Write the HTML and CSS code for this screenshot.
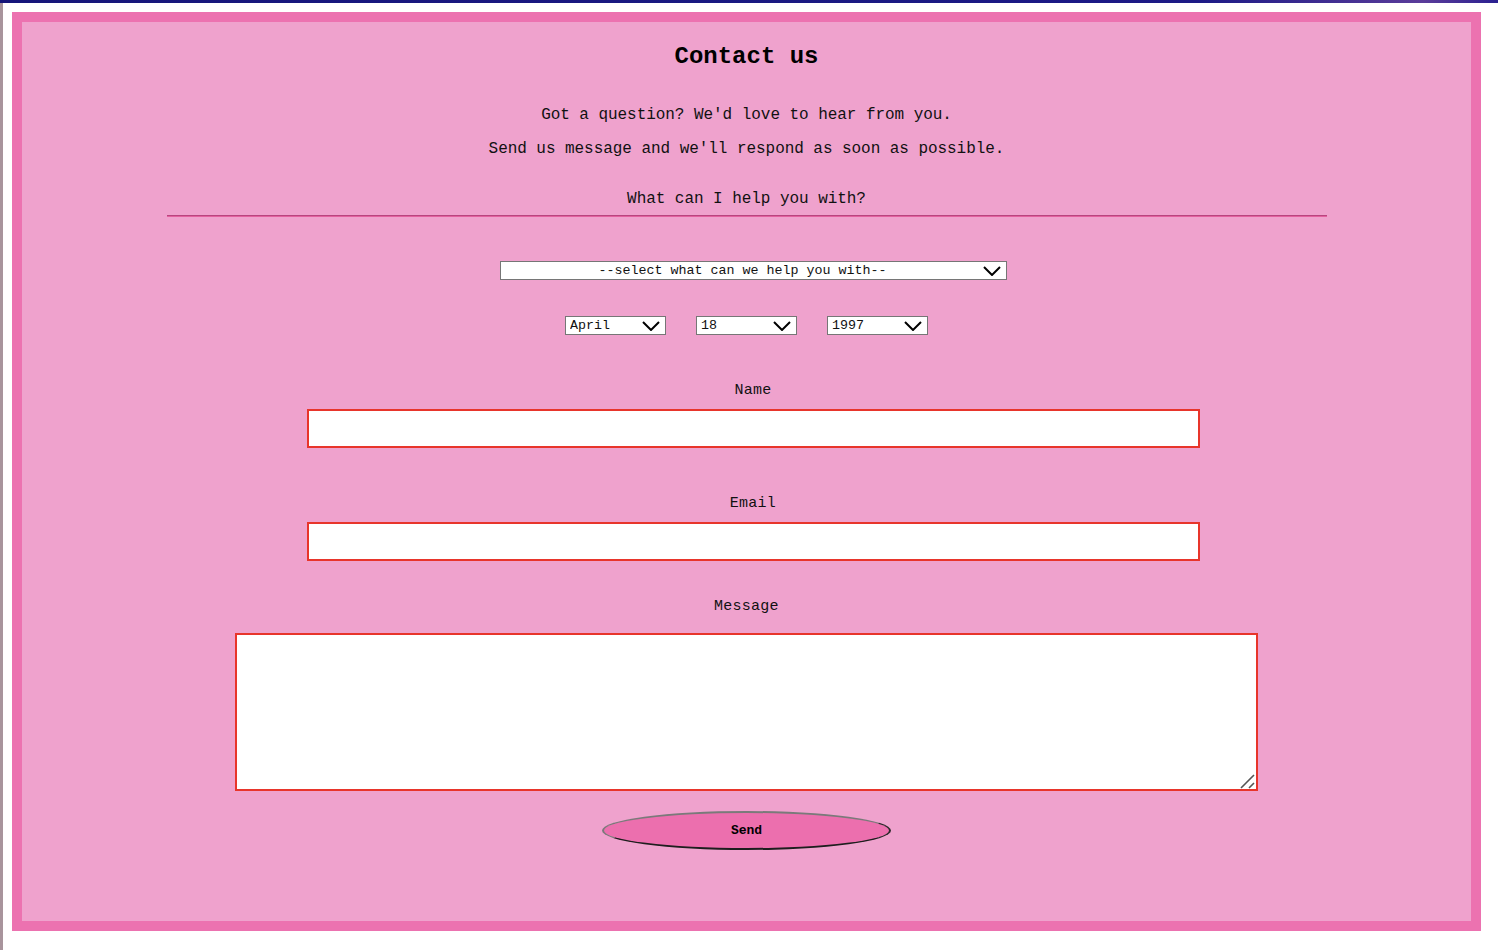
FILE: index.html
```html
<!DOCTYPE html>
<html lang="en">
<head>
<meta charset="utf-8">
<title>Contact us</title>
<link rel="stylesheet" href="styles.css">
</head>
<body>
<div class="topbar"></div>
<div class="page">
  <div class="sidebar"></div>
  <main class="panel">
    <h1 class="title">Contact us</h1>
    <p class="lead lead--first">Got a question? We'd love to hear from you.</p>
    <p class="lead lead--second">Send us message and we'll respond as soon as possible.</p>
    <p class="lead lead--third">What can I help you with?</p>
    <div class="rule"></div>

    <div class="row row--topic">
      <span class="select-wrap">
        <select class="select select--topic">
          <option>--select what can we help you with--</option>
        </select>
        <svg class="chevron" width="18" height="10" viewBox="0 0 18 10"><path d="M1 1 L9 9 L17 1" fill="none" stroke="#000" stroke-width="2"/></svg>
      </span>
    </div>

    <div class="row row--date">
      <span class="select-wrap">
        <select class="select select--date"><option>April</option></select>
        <svg class="chevron" width="18" height="10" viewBox="0 0 18 10"><path d="M1 1 L9 9 L17 1" fill="none" stroke="#000" stroke-width="2"/></svg>
      </span>
      <span class="select-wrap">
        <select class="select select--date"><option>18</option></select>
        <svg class="chevron" width="18" height="10" viewBox="0 0 18 10"><path d="M1 1 L9 9 L17 1" fill="none" stroke="#000" stroke-width="2"/></svg>
      </span>
      <span class="select-wrap">
        <select class="select select--date"><option>1997</option></select>
        <svg class="chevron" width="18" height="10" viewBox="0 0 18 10"><path d="M1 1 L9 9 L17 1" fill="none" stroke="#000" stroke-width="2"/></svg>
      </span>
    </div>

    <div class="field field--offset field--name">
      <label class="label">Name</label>
      <input class="input" type="text">
    </div>

    <div class="field field--offset field--email">
      <label class="label">Email</label>
      <input class="input" type="text">
    </div>

    <div class="field field--message">
      <label class="label">Message</label>
      <span class="textarea-wrap">
        <textarea class="textarea"></textarea>
        <svg class="grip" width="16" height="16" viewBox="0 0 16 16"><path d="M2 15 L15 2 M10 15 L15 10" fill="none" stroke="#555" stroke-width="1.6"/></svg>
      </span>
    </div>

    <div class="actions">
      <button class="send" type="button">Send</button>
    </div>
  </main>
</div>
</body>
</html>
```

FILE: styles.css
```css
* { box-sizing: border-box; }

html, body {
  margin: 0;
  padding: 0;
  background: #ffffff;
}

body {
  width: 1498px;
  height: 950px;
  overflow: hidden;
  font-family: "Liberation Mono", "Courier New", monospace;
  color: #000;
}

.topbar {
  height: 3px;
  background: linear-gradient(90deg, #16167a 0%, #1c1a86 80%, #5a3c9a 95%, #2a2090 100%);
}

.page {
  display: flex;
  align-items: flex-start;
  padding-top: 9px;
}

.sidebar {
  width: 3px;
  height: 947px;
  margin-top: -9px;
  background: #a8949c;
  flex: none;
}

.panel {
  margin-left: 9px;
  width: 1469px;
  height: 919px;
  border: 10px solid #ec72b0;
  background: #efa2cd;
  padding-top: 21px;
  text-align: center;
  flex: none;
}

.title {
  margin: 0;
  font-size: 24px;
  line-height: 28px;
  font-weight: bold;
}

.lead {
  margin: 0;
  font-size: 16px;
  line-height: 20px;
  letter-spacing: -0.05px;
  color: #111;
}

.lead--first { margin-top: 34px; }
.lead--second { margin-top: 14px; }
.lead--third { margin-top: 30px; }

.rule {
  width: 1160px;
  margin: 6px auto 0;
  height: 2px;
  border-top: 1px solid #b8457e;
  border-bottom: 1px solid #e3609f;
}

.row {
  display: flex;
  justify-content: center;
}

.row--topic {
  margin-top: 44px;
  padding-left: 14px;
}

.row--date {
  margin-top: 36px;
  gap: 30px;
}

.select-wrap {
  position: relative;
  display: block;
}

.select {
  -webkit-appearance: none;
  appearance: none;
  display: block;
  height: 19px;
  margin: 0;
  background: #fff;
  border: 1px solid #767676;
  border-radius: 0;
  font-family: "Liberation Mono", "Courier New", monospace;
  font-size: 13.333px;
  line-height: 17px;
  color: #111;
  padding: 0 26px 0 4px;
}

.select--topic {
  width: 507px;
  text-align: center;
  text-align-last: center;
}

.select--date {
  width: 101px;
  text-align: left;
}

.chevron {
  position: absolute;
  right: 6px;
  top: 5px;
  pointer-events: none;
}

.field {
  display: flex;
  flex-direction: column;
  align-items: center;
}

.field--offset { padding-left: 13px; }

.field--name { margin-top: 46px; }
.field--email { margin-top: 46px; }
.field--message { margin-top: 36px; }

.label {
  display: block;
  font-size: 15px;
  line-height: 20px;
  letter-spacing: 0.25px;
  color: #111;
}

.input {
  display: block;
  width: 893px;
  height: 39px;
  margin-top: 8px;
  border: 2px solid #e8352b;
  background: #fff;
  border-radius: 0;
  outline: none;
  padding: 0 4px;
}

.textarea-wrap {
  position: relative;
  display: block;
  margin-top: 16px;
}

.textarea {
  display: block;
  width: 1023px;
  height: 158px;
  margin: 0;
  border: 2px solid #e8352b;
  background: #fff;
  border-radius: 0;
  outline: none;
  resize: none;
}

.grip {
  position: absolute;
  right: 3px;
  bottom: 2px;
  pointer-events: none;
}

.actions {
  display: flex;
  justify-content: center;
  margin-top: 20px;
}

.send {
  width: 289px;
  height: 39px;
  border-radius: 50%;
  background: #ec6fae;
  border-style: solid;
  border-width: 2px;
  border-color: #7a7a7a #2a2a2a #1e1e1e #7a7a7a;
  font-family: "Liberation Mono", "Courier New", monospace;
  font-size: 13px;
  font-weight: bold;
  color: #000;
  padding: 0;
}
```
